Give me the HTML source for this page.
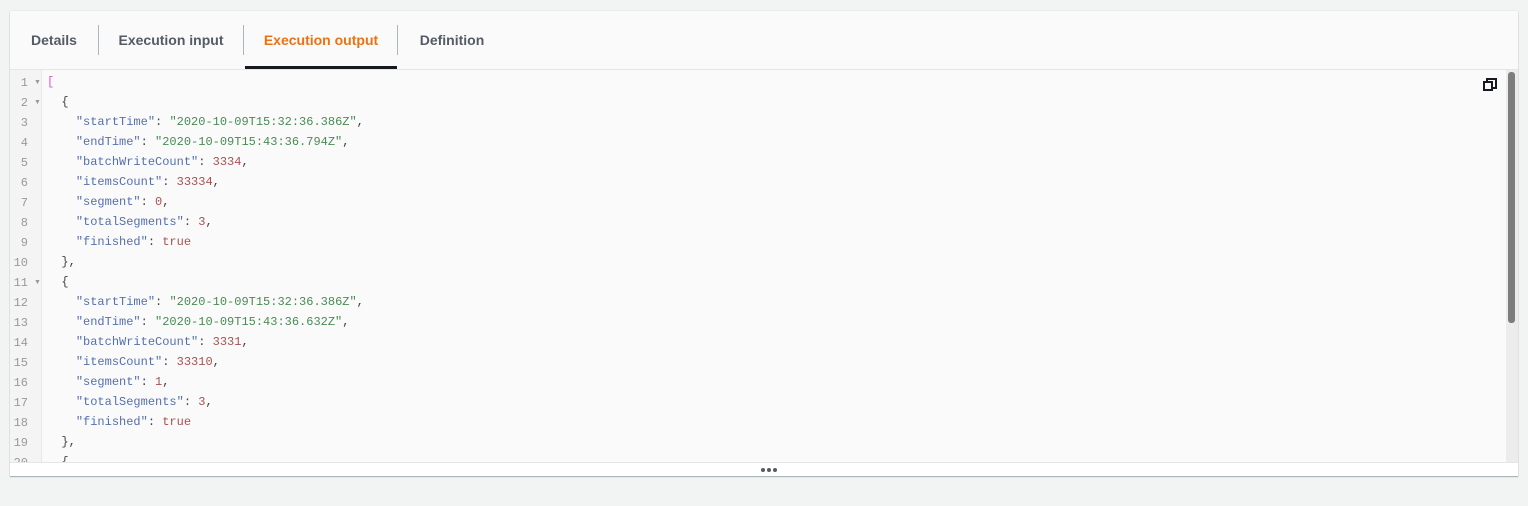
<!DOCTYPE html>
<html><head><style>
body{margin:0;background:#f2f3f3;width:1528px;height:506px;overflow:hidden;font-family:"Liberation Sans",sans-serif}
.card{position:absolute;left:10px;top:11px;width:1508px;height:465px;background:#fafafa;box-shadow:0 1px 1px rgba(0,0,0,.25),0 0 1px rgba(0,0,0,.15)}
.tabs{position:absolute;left:0;top:0;width:1508px;height:58px;border-bottom:1px solid #e6e6e6}
.tab{position:absolute;top:0;height:58px;line-height:58px;font-size:14px;font-weight:bold;color:#545b64;text-align:center}
.sep{position:absolute;top:14px;width:1px;height:30px;background:#aab7b8}
.ed{position:absolute;left:0;top:59px;width:1508px;height:392px;background:#fafafa;overflow:hidden}
.gut{position:absolute;left:0;top:0;width:31px;height:392px;background:#f4f4f4;border-right:1px solid #e8e8e8}
.ln{position:absolute;left:0;width:18px;text-align:right;font:12px "Liberation Mono",monospace;color:#999}
.fa{position:absolute;left:24px;font-size:7px;color:#999}
.code{position:absolute;left:37px;top:2px;font:12px/20px "Liberation Mono",monospace;color:#444;white-space:pre}
.k{color:#5470b0}.s{color:#4a8a55}.n{color:#a95050}.b{color:#d060c8}.t{color:#a95050}
.bar{position:absolute;left:0;top:451px;width:1508px;height:13px;background:#fff;border-top:1px solid #e6e6e6;border-bottom:1px solid #aab7b8}
.dot{position:absolute;top:5px;width:4px;height:4px;border-radius:2px;background:#545b64}
</style></head><body>
<div class="card">
<div class="tabs">
<div class="tab" style="left:0;width:88px">Details</div>
<div class="sep" style="left:88px"></div>
<div class="tab" style="left:89px;width:144px">Execution input</div>
<div class="sep" style="left:233px"></div>
<div class="tab" style="left:235px;width:152px;color:#ec7211">Execution output</div>
<div style="position:absolute;left:235px;top:55px;width:152px;height:3px;background:#16191f"></div>
<div class="sep" style="left:387px"></div>
<div class="tab" style="left:388px;width:108px">Definition</div>
</div>
<div class="ed">
<div class="gut" id="g"></div>
<div class="code"><span class="b">[</span>
  {
    <span class="k">"startTime"</span>: <span class="s">"2020-10-09T15:32:36.386Z"</span>,
    <span class="k">"endTime"</span>: <span class="s">"2020-10-09T15:43:36.794Z"</span>,
    <span class="k">"batchWriteCount"</span>: <span class="n">3334</span>,
    <span class="k">"itemsCount"</span>: <span class="n">33334</span>,
    <span class="k">"segment"</span>: <span class="n">0</span>,
    <span class="k">"totalSegments"</span>: <span class="n">3</span>,
    <span class="k">"finished"</span>: <span class="t">true</span>
  },
  {
    <span class="k">"startTime"</span>: <span class="s">"2020-10-09T15:32:36.386Z"</span>,
    <span class="k">"endTime"</span>: <span class="s">"2020-10-09T15:43:36.632Z"</span>,
    <span class="k">"batchWriteCount"</span>: <span class="n">3331</span>,
    <span class="k">"itemsCount"</span>: <span class="n">33310</span>,
    <span class="k">"segment"</span>: <span class="n">1</span>,
    <span class="k">"totalSegments"</span>: <span class="n">3</span>,
    <span class="k">"finished"</span>: <span class="t">true</span>
  },
  {</div>
<svg style="position:absolute;left:1473px;top:8px" width="14" height="14" viewBox="0 0 14 14"><path d="M4 4V1h9v9h-4" fill="none" stroke="#16191f" stroke-width="2"/><rect x="1" y="4" width="8" height="8" fill="none" stroke="#16191f" stroke-width="2"/></svg>
<div style="position:absolute;left:1496px;top:0;width:12px;height:392px;background:#ececec"></div>
<div style="position:absolute;left:1498px;top:2px;width:7px;height:251px;border-radius:3px;background:#7d7d7d"></div>
</div>
<div class="bar"><div class="dot" style="left:751px"></div><div class="dot" style="left:757px"></div><div class="dot" style="left:763px"></div></div>
</div>
<script>
var g=document.getElementById('g'),h='';
for(var i=1;i<=20;i++){h+='<div class="ln" style="top:'+((i-1)*20+6)+'px">'+i+'</div>';
if(i==1||i==2||i==11)h+='<div class="fa" style="top:'+((i-1)*20+9)+'px">&#9660;</div>';}
g.innerHTML=h;
</script>
</body></html>
